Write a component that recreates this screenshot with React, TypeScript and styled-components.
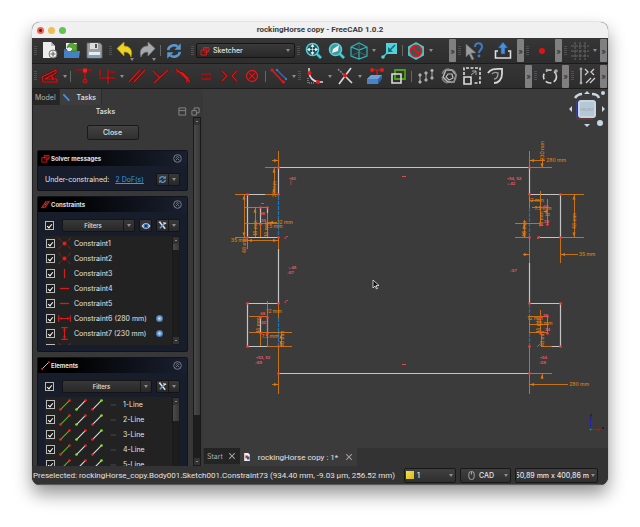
import React from "react";
import styled, { createGlobalStyle, css } from "styled-components";

const Global = createGlobalStyle`
  *, *::before, *::after { box-sizing: border-box; }
  body { margin: 0; background: #fff; }
  body, button, select, input { font-family: Inter, "Liberation Sans", sans-serif; }
  button { margin: 0; padding: 0; border: 0; background: none; color: inherit; font-size: inherit; }
  svg { display: block; flex: none; }
`;

const c = {
  text: "#e2e2e2",
  bar: "#303030",
  dock: "#383838",
  canvas: "#3b3b3b",
  edge: "#1c1c1c",
  red: "#d81a1a",
  orange: "#e07c0c",
  aqua: "#4fd0d8",
};

/* ---------- window frame ---------- */

const Page = styled.div`
  height: 100vh;
  padding: 22px 32px 42px;
  display: flex;
  overflow: hidden;
`;
const Window = styled.main`
  flex: 1;
  min-width: 0;
  display: flex;
  flex-direction: column;
  overflow: hidden;
  border-radius: 8px;
  background: ${c.bar};
  color: ${c.text};
  font-size: 7px;
  box-shadow: 0 0 1px rgba(0, 0, 0, 0.5), 0 9px 18px rgba(0, 0, 0, 0.42);
`;
const TitleBar = styled.header`
  flex: none;
  height: 16px;
  padding: 0 5px;
  display: grid;
  grid-template-columns: 1fr auto 1fr;
  align-items: center;
  background: #f1f0f0;
  color: #3c3c3c;
`;
const Title = styled.h1`
  margin: 0;
  font-family: Roboto, Inter, sans-serif;
  font-size: 8px;
  line-height: 16px;
  font-weight: 700;
`;
const Lights = styled.div`
  display: flex;
  gap: 4px;
`;
const Light = styled.button<{ $color: string; $dot?: boolean }>`
  width: 7px;
  height: 7px;
  border-radius: 50%;
  background: ${(p) => (p.$dot ? `radial-gradient(#7a1510 1px, ${p.$color} 2px)` : p.$color)};
`;

/* ---------- toolbars ---------- */

const ToolRow = styled.div<{ $h: number }>`
  flex: none;
  height: ${(p) => p.$h}px;
  padding-right: 1px;
  display: flex;
  border-bottom: 1px solid ${c.edge};
  background: linear-gradient(#363636, #2d2d2d);
`;
const Group = styled.div<{ $w?: number }>`
  display: flex;
  align-items: center;
  ${(p) => (p.$w ? css`flex: none; width: ${p.$w}px;` : css`flex: 1;`)}
`;
const Grip = styled.span`
  flex: none;
  width: 3px;
  height: 10px;
  margin: 0 2px;
  background: repeating-linear-gradient(#505050 0 1px, transparent 1px 2px);
`;
const Tool = styled.button<{ $w?: number }>`
  flex: none;
  width: ${(p) => p.$w ?? 22}px;
  height: 22px;
  display: grid;
  place-items: center;
  position: relative;
`;
const Caret = styled.span`
  flex: none;
  width: 7px;
  display: grid;
  place-items: center;
  &::after {
    content: "";
    border: 2px solid transparent;
    border-top: 3px solid #8d8d8d;
    border-bottom: 0;
  }
`;
const CornerCaret = styled(Caret)`
  position: absolute;
  right: 1px;
  bottom: 1px;
`;
const Divider = styled.span`
  flex: none;
  width: 1px;
  height: 11px;
  margin: 0 2px;
  background: #666;
`;
const More = styled.button`
  flex: none;
  align-self: center;
  width: 7px;
  height: 23px;
  margin-left: auto;
  border-radius: 1px;
  background: #808080;
  color: #242424;
  font-size: 8px;
  line-height: 20px;
  text-align: center;
`;
const Workbench = styled.label`
  flex: 1;
  height: 15px;
  padding: 0 3px;
  display: flex;
  align-items: center;
  gap: 3px;
  border: 1px solid #151515;
  border-radius: 2px;
  background: linear-gradient(#3a3a3a, #282828);
`;
const Picker = styled.select`
  flex: 1;
  min-width: 0;
  padding: 0;
  border: 0;
  appearance: none;
  background: transparent;
  color: ${c.text};
  font-size: 7px;
  font-weight: 500;
`;

/* ---------- task dock ---------- */

const Body = styled.div`
  flex: 1;
  min-height: 0;
  display: flex;
`;
const Dock = styled.aside`
  flex: none;
  width: 171px;
  display: flex;
  flex-direction: column;
  background: ${c.dock};
  border-left: 1px solid #222;
`;
const DockTabs = styled.div`
  flex: none;
  height: 16px;
  display: flex;
  align-items: stretch;
`;
const DockTab = styled.button<{ $active?: boolean }>`
  padding: 0 3px 0 2px;
  display: flex;
  align-items: center;
  gap: 6px;
  font-size: 7px;
  font-weight: ${(p) => (p.$active ? 500 : 400)};
  color: ${(p) => (p.$active ? c.text : "#b4b4b4")};
  background: ${(p) => (p.$active ? "#3d3d3d" : "#262626")};
  border-right: 1px solid #2a2a2a;
  ${(p) => p.$active && css`padding-right: 5px;`}
`;
const DockTitle = styled.div`
  flex: none;
  height: 12px;
  padding-right: 3px;
  display: grid;
  grid-template-columns: 1fr auto;
  align-items: center;
  text-align: center;
  font-weight: 500;
`;
const DockTools = styled.div`
  display: flex;
  gap: 4px;
`;
const DockBody = styled.div`
  flex: 1;
  min-height: 0;
  display: flex;
  gap: 5px;
  padding: 0 2px 0 4px;
`;
const TaskList = styled.div`
  flex: 1;
  min-width: 0;
  overflow: hidden;
  padding-top: 8px;
  display: flex;
  flex-direction: column;
  gap: 5px;
`;
const CloseButton = styled.button`
  flex: none;
  align-self: center;
  width: 52px;
  height: 15px;
  margin-bottom: 5px;
  border: 1px solid #1a1a1a;
  border-radius: 2px;
  background: linear-gradient(#424242, #303030);
  font-size: 7px;
  font-weight: 500;
`;
const Panel = styled.section<{ $list?: boolean }>`
  flex: none;
  padding-bottom: ${(p) => (p.$list ? 6 : 0)}px;
  border: 1px solid #10131b;
  border-radius: 2px;
  background: #171d2a;
`;
const PanelHead = styled.header`
  height: 15px;
  padding: 0 5px 0 3px;
  display: flex;
  align-items: center;
  gap: 1px;
  background: linear-gradient(90deg, #000 20%, #1a2030);
`;
const PanelTitle = styled.h2`
  flex: 1;
  margin: 0;
  font-size: 6px;
  font-weight: 700;
`;
const PanelRow = styled.div`
  height: 24px;
  padding: 3px 7px 0;
  display: flex;
  align-items: center;
  gap: 4px;
`;
const Message = styled.p`
  flex: 1;
  margin: 0;
  display: flex;
  gap: 6px;
  white-space: nowrap;
  a { color: #2f9bea; }
`;
const Split = styled.div<{ $grow?: boolean }>`
  height: 13px;
  display: flex;
  border: 1px solid #141414;
  border-radius: 2px;
  background: linear-gradient(#383838, #282828);
  ${(p) => p.$grow && css`flex: 1; margin-left: 4px;`}
  button { display: grid; place-items: center; width: 11px; font-size: 6px; font-weight: 500; }
  button + button { border-left: 1px solid #181818; }
  ${(p) => p.$grow && css`button:first-child { flex: 1; }`}
`;
const Check = styled.input`
  flex: none;
  width: 9px;
  height: 9px;
  margin: 0;
  display: grid;
  place-items: center;
  appearance: none;
  border: 1px solid #b9b9b9;
  background: #1b1b1b;
  &:checked::after {
    content: "";
    width: 3px;
    height: 5px;
    border: solid #fff;
    border-width: 0 1px 1px 0;
    transform: rotate(40deg);
  }
`;
const ListBox = styled.div<{ $h: number }>`
  height: ${(p) => p.$h}px;
  margin: 0 7px;
  display: flex;
  overflow: hidden;
  background: #222;
`;
const Rows = styled.ul`
  flex: 1;
  margin: 0;
  padding: 0 0 0 1px;
  list-style: none;
`;
const Row = styled.li`
  height: 15px;
  display: flex;
  align-items: center;
  label { flex: 1; display: flex; align-items: center; gap: 4px; }
`;
const ConstraintLabel = styled.label`
  && { gap: 3px; }
`;
const RowText = styled.span`
  white-space: nowrap;
`;
const Ball = styled.span`
  width: 7px;
  height: 7px;
  margin-right: 9px;
  border-radius: 50%;
  background: radial-gradient(#cfe0f2, #3f74ad 65%);
`;
const Scroll = styled.div`
  flex: none;
  width: 8px;
  display: flex;
  flex-direction: column;
  border: 1px solid #191919;
  background: #1d1d1d;
`;
const ScrollEnd = styled.button`
  flex: none;
  height: 7px;
  display: grid;
  place-items: center;
  background: #333;
  &::after { content: ""; width: 2px; height: 1px; background: #888; }
`;
const Thumb = styled.span<{ $size: string }>`
  flex: 0 0 ${(p) => p.$size};
  background: linear-gradient(90deg, #4a4a4a, #383838);
`;
const Track = styled.span`
  flex: 1;
  min-height: 0;
  display: flex;
  flex-direction: column;
`;

/* ---------- drawing area ---------- */

const Work = styled.section`
  flex: 1;
  min-width: 0;
  display: flex;
  flex-direction: column;
  background: #333;
`;
const Canvas = styled.div`
  flex: 1;
  min-height: 0;
  position: relative;
  background: ${c.canvas};
  > svg:first-child { width: 100%; height: 100%; }
`;
const NavCube = styled.div`
  position: absolute;
  top: 0;
  right: 1px;
`;
const Axes = styled.div`
  position: absolute;
  right: 0;
  bottom: 14px;
`;
const DocTabs = styled.div`
  flex: none;
  height: 18px;
  padding-left: 1px;
  display: flex;
  align-items: flex-start;
`;
const DocTab = styled.div<{ $active?: boolean }>`
  height: ${(p) => (p.$active ? 18 : 16)}px;
  padding: 0 4px 0 3px;
  display: flex;
  align-items: center;
  gap: ${(p) => (p.$active ? 7 : 5)}px;
  background: ${(p) => (p.$active ? c.canvas : "#242424")};
  color: ${(p) => (p.$active ? c.text : "#aaa")};
  font-family: ${(p) => (p.$active ? "Roboto, Inter, sans-serif" : "inherit")};
  font-size: ${(p) => (p.$active ? 8 : 7)}px;
`;

const StatusBar = styled.footer`
  flex: none;
  height: 19px;
  padding: 0 10px 0 1px;
  display: flex;
  align-items: center;
  gap: 4px;
  background: #333;
  font-weight: 500;
  border-bottom: 1px solid #5a5a5a;
`;
const StatusText = styled.span`
  flex: 1;
  min-width: 0;
  overflow: hidden;
  white-space: nowrap;
  font-family: Roboto, Inter, sans-serif;
  font-size: 8px;
  font-weight: 400;
`;
const StatusButton = styled.button<{ $w: number; $tight?: boolean }>`
  flex: none;
  width: ${(p) => p.$w}px;
  height: 15px;
  padding: 0 1px;
  display: flex;
  align-items: center;
  gap: ${(p) => (p.$tight ? 0 : 3)}px;
  border: 1px solid #181818;
  border-radius: 2px;
  background: linear-gradient(#404040, #2f2f2f);
  font-weight: 500;
`;
const StatusLabel = styled.span<{ $align?: string }>`
  flex: 1;
  min-width: 0;
  overflow: hidden;
  display: flex;
  align-items: center;
  justify-content: ${(p) => p.$align ?? "flex-start"};
  gap: 3px;
  white-space: nowrap;
`;
const Swatch = styled.span`
  width: 8px;
  height: 8px;
  background: linear-gradient(135deg, #f6e04c, #d8b71c);
`;

/* ---------- icons ---------- */

type IconProps = { size?: number; children: React.ReactNode; stroke?: string; sw?: number };
const Icon = ({ size = 20, children, stroke = "none", sw = 1.5 }: IconProps) => (
  <svg width={size} height={size} viewBox="0 0 20 20" fill="none" stroke={stroke} strokeWidth={sw} aria-hidden="true">
    {children}
  </svg>
);
const RedIcon = ({ children, d }: { children?: React.ReactNode; d: string }) => (
  <Icon>
    <path d={d} stroke="#5c0808" strokeWidth="2.2" />
    <path d={d} stroke={c.red} strokeWidth="1.2" />
    {children}
  </Icon>
);

const NewIcon = () => (
  <Icon>
    <path d="M3 1h8l4 4v12H3z" fill="#ededed" />
    <path d="M11 1v4h4z" fill="#b9b9b9" />
    <circle cx="13" cy="13" r="4" fill="#eee" stroke="#777" strokeWidth="1" />
    <path d="M13 10.500v5M10.500 13h5" stroke="#666" strokeWidth="1.2" />
  </Icon>
);
const OpenIcon = () => (
  <Icon>
    <path d="M4 2h11v10H4z" fill="#eee" />
    <path d="M2 8h3l1 3h11v6H2z" fill="#3571ad" />
    <path d="M2 10h16l-1 7H2z" fill="#4583c0" />
    <path d="M5 7C6 2 10 1 13 4l2-1v7H9l2-2C9 6 7 5 5 7z" fill="#59a832" stroke="#2d6d16" strokeWidth=".6" />
  </Icon>
);
const SaveIcon = () => (
  <Icon>
    <path d="M3 2h13l2 2v13H3z" fill="#9ba0a3" stroke="#62676a" strokeWidth=".8" />
    <path d="M6 2h8v6H6z" fill="#deded9" />
    <path d="M11 3h2v4h-2z" fill="#555" />
    <path d="M5 11h11v6H5z" fill="#e9ecef" />
    <path d="M5 14h11v3H5z" fill="#7aa0c6" />
  </Icon>
);
const UndoIcon = ({ redo }: { redo?: boolean }) => (
  <Icon>
    <g transform={redo ? "matrix(-1 0 0 1 20 0)" : undefined}>
      <path d="M2 7.500 9 1v4c6 0 9 4 7 11-1.500-4-3.500-5-7-5v4z" fill={redo ? "#a7abae" : "#f0d322"} stroke={redo ? "#7b7f82" : "#b39a10"} strokeWidth=".7" />
    </g>
  </Icon>
);
const RefreshIcon = ({ size = 20 }: { size?: number }) => (
  <Icon size={size} stroke="#5b97cf" sw={2.800}>
    <path d="M3.500 9A6.500 6 0 0 1 14 5M16.500 11A6.500 6 0 0 1 6 15" />
    <path d="M17.500 1.500v7h-7zM2.500 18.500v-7h7z" fill="#5b97cf" stroke="none" />
  </Icon>
);
const SketchIcon = ({ size = 10 }: { size?: number }) => (
  <Icon size={size} stroke={c.red} sw={2}>
    <path d="M2 8h11v10H2zM7 8V3h11v8h-5" />
    <circle cx="12" cy="9" r="4.500" strokeWidth="1.500" />
  </Icon>
);
const ZoomIcon = ({ fit }: { fit?: boolean }) => (
  <Icon>
    <path d="m12 12 5 5" stroke="#216e75" strokeWidth="3.600" />
    <path d="m12 12 5 5" stroke={c.aqua} strokeWidth="2.200" />
    <circle cx="8.500" cy="8.500" r="6" fill={fit ? "#1f5057" : "#42979d"} stroke={c.aqua} strokeWidth="1.600" />
    {fit ? <path d="M8.500 4v9M4 8.500h9M8.500 3.500l-1.500 2h3zM8.500 13.500l-1.500-2h3zM3.500 8.500l2-1.500v3zM13.500 8.500l-2-1.500v3z" stroke="#fff" strokeWidth=".6" fill="#fff" />
      : <path d="M5 12l1-4 6-4-1 6z" fill="#eee" />}
  </Icon>
);
const CubeIcon = () => (
  <Icon stroke="#35b1ba" sw={1.200}>
    <path d="M2 6 10 2l8 4v9l-8 3-8-3zM2 6l8 3 8-3M10 9v9" />
    <path d="M10 2v9M2 15l8-4 8 4" strokeWidth=".8" stroke="#26858c" />
  </Icon>
);
const LinkIcon = () => (
  <Icon>
    <path d="M7 2h11v11H7z" fill="#52d2da" />
    <path d="m16 4-6 6" stroke="#176d75" strokeWidth="1.600" />
    <path d="M9 6v5h5z" fill="#176d75" />
    <path d="m9 11-5 5" stroke={c.aqua} strokeWidth="1.200" />
    <circle cx="4" cy="16" r="1.800" fill="#52d2da" />
  </Icon>
);
const ClipIcon = () => (
  <Icon>
    <path d="M2 5.500 10 1l8 4.500v9L10 19l-8-4.500z" fill="#42c4cb" />
    <circle cx="10" cy="10" r="5.500" fill="#245f66" stroke="#e31717" strokeWidth="1.800" />
    <path d="m6 6 8 8" stroke="#e31717" strokeWidth="1.800" />
  </Icon>
);
const WhatsThisIcon = () => (
  <Icon>
    <path d="M2 3v13l3-3 3 6 2-1-3-6h5z" fill="#9a9da0" stroke="#666" strokeWidth=".6" />
    <path d="M11 6c0-5 7-5 7 0 0 3-3 3-3 6" stroke="#3f7cc4" strokeWidth="2" />
    <circle cx="15" cy="15" r="1.400" fill="#3f7cc4" />
  </Icon>
);
const ExportIcon = () => (
  <Icon>
    <path d="M5 10H2.500v7h15v-7H15" stroke="#ddd" strokeWidth="1.600" />
    <path d="m10 1 5 6h-3v6H8V7H5z" fill="#4b8ed6" stroke="#1f4c80" strokeWidth=".6" />
  </Icon>
);
const GridIcon = () => (
  <Icon stroke="#666" sw={1}>
    <path d="M5 1v18M10 1v18M15 1v18M1 5h18M1 10h18M1 15h18" strokeDasharray="3 1" />
  </Icon>
);
const DimensionIcon = () => (
  <RedIcon d="M2 11 16 4v3L5 13h12v3H3zM11 9c2 1 2 3 2 5" />
);
const CoincidentIcon = () => (
  <RedIcon d="M2 4h16M11 4v9">
    <path d="M9 2.500h4v4H9z" fill="#f02020" />
    <circle cx="11" cy="15" r="2" fill="#8c1010" stroke={c.red} strokeWidth=".8" />
  </RedIcon>
);
const BlockIcon = () => (
  <RedIcon d="M6.500 6.500l7 7M13.500 6.500l-7 7">
    <circle cx="10" cy="10" r="5.500" stroke={c.red} strokeWidth="1.300" />
  </RedIcon>
);
const ToggleIcon = () => (
  <Icon>
    <path d="m3 4 11 12" stroke={c.red} strokeWidth="1.800" />
    <path d="m8 4 9 9" stroke="#3569ad" strokeWidth="1.400" />
    <g fill="#e01a1a"><circle cx="3" cy="4" r="1.600" /><circle cx="14.500" cy="16" r="1.600" /></g>
    <g fill="#3f78c2"><circle cx="8" cy="4" r="1.200" /><circle cx="17" cy="13" r="1.200" /></g>
  </Icon>
);
const FilletIcon = () => (
  <Icon>
    <path d="M3 12v5h6" stroke="#888" strokeDasharray="1 1" />
    <path d="M4 2v5c1 5 4 8 9 9h5" stroke="#ddd" strokeWidth="1.500" />
    <circle cx="4.500" cy="7" r="2" fill="#f01818" /><circle cx="13" cy="16" r="2" fill="#f01818" />
  </Icon>
);
const TrimIcon = () => (
  <Icon>
    <path d="m3 3 6 6" stroke="#888" strokeDasharray="2 1" />
    <path d="M16 2 4 18M9 9l8 8" stroke="#ddd" strokeWidth="1.600" />
    <circle cx="10" cy="9.500" r="2" fill="#f01818" />
  </Icon>
);
const ExternalIcon = () => (
  <Icon>
    <path d="M7 4h10M12 4v5" stroke={c.red} strokeWidth="1.200" />
    <circle cx="7" cy="4" r="1.900" fill="#f01818" /><circle cx="17" cy="4" r="1.900" fill="#f01818" />
    <path d="M2 13l4-4h11v4l-4 5H2z" fill="#2d62a4" />
    <path d="M2 13l4-4h11l-4 4z" fill="#6ba0d8" />
    <path d="M2 13h11v5H2z" fill="#4a82c3" />
  </Icon>
);
const CarbonIcon = () => (
  <Icon>
    <path d="M7 4h10v9H7z" stroke="#4aa313" strokeWidth="1.800" />
    <path d="M4 8h9v9H4z" stroke="#ddd" strokeWidth="1.600" />
  </Icon>
);
const PolesIcon = () => (
  <Icon stroke="#a8a8a8" sw={1}>
    <path d="M4 9v7M10 7v7M16 5v7" />
    <g fill="#b7b7b7"><circle cx="4" cy="9" r="1.200" /><circle cx="4" cy="16" r="1.200" /><circle cx="10" cy="7" r="1.200" /><circle cx="10" cy="14" r="1.200" /><circle cx="16" cy="4.500" r="1.200" /><circle cx="16" cy="12" r="1.200" /></g>
  </Icon>
);
const OverlapIcon = () => (
  <Icon stroke="#bcbcbc" sw={1.400}>
    <path d="M7 4h6l4 5-2 7H9l-5-5z" /><path d="M9 8h4l1 4-4 2-3-3z" strokeWidth="1.200" /><ellipse cx="10" cy="10" rx="7" ry="7" stroke="#858585" strokeDasharray="9 3" />
  </Icon>
);
const ScaleIcon = () => (
  <Icon stroke="#ddd" sw={1.600}>
    <path d="M2 9V2h16v15h-6" strokeDasharray="3 1.500" /><path d="M2 11h7v7H2z" /><path d="m9 9 5-4M10 5h4v4" stroke="#aaa" strokeWidth="1" />
  </Icon>
);
const OffsetIcon = () => (
  <Icon stroke="#d5d5d5" sw={1.800}>
    <path d="M3 7c3-5 8-4 14-4v5c0 6-4 9-8 9" /><path d="M7 8c2-2 3-2 6-1 0 4-1 6-4 6" stroke="#999" strokeWidth="1.400" />
  </Icon>
);
const CircleIcon = () => (
  <Icon stroke="#d5d5d5" sw={1.600}>
    <circle cx="10" cy="10.500" r="6.500" strokeDasharray="6 2.500" /><circle cx="16" cy="5" r="1.800" fill="#aaa" stroke="none" /><circle cx="7" cy="4" r="1.300" fill="#aaa" stroke="none" />
  </Icon>
);
const MixedIcon = () => (
  <Icon stroke="#d0d0d0" sw={1.300}>
    <path d="M4 3v14M8 3l3 3-3 3M17 3l-3 3 3 3M9 17l5-5M13 17l5-5" />
    <circle cx="4" cy="3" r="1.400" fill="#aaa" stroke="none" /><circle cx="4" cy="17" r="1.400" fill="#aaa" stroke="none" />
  </Icon>
);
const FoldIcon = () => (
  <Icon size={9} stroke="#8b90a0" sw={1.800}>
    <circle cx="10" cy="10" r="8.500" /><path d="m6 9 4-4 4 4M6 14l4-4 4 4" />
  </Icon>
);
const ToolsIcon = () => (
  <Icon size={9}>
    <path d="m4 3 12 14" stroke="#e2e2e2" strokeWidth="3.400" /><path d="M16 4 4 16" stroke="#6c9fd4" strokeWidth="3.400" />
    <path d="M12 3l3 3 3-2M2 3l4-1" stroke="#e2e2e2" strokeWidth="2.500" />
  </Icon>
);
const EyeIcon = () => (
  <Icon size={10}>
    <path d="M1 10c5-8 13-8 18 0-5 8-13 8-18 0z" fill="#c8dcf2" /><circle cx="10" cy="10" r="5" fill="#3973b4" /><circle cx="10" cy="10" r="2.200" fill="#0c2340" />
  </Icon>
);
const XIcon = () => (
  <Icon size={8} stroke="#a0a0a0" sw={2.600}><path d="m3 3 14 14M17 3 3 17" /></Icon>
);
const LineIcon = ({ a, line, b }: { a: string; line: string; b: string }) => (
  <Icon size={12}>
    <path d="M2 18 18 2" stroke={line} strokeWidth="1.800" /><circle cx="2.500" cy="17.500" r="2.200" fill={a} /><circle cx="17.500" cy="2.500" r="2.200" fill={b} />
  </Icon>
);

const rowIcons: Record<string, React.ReactNode> = {
  point: <Icon size={13} stroke="#c81818" sw={1.500}><path d="m1 2 5 5M19 2l-5 5M1 18l5-5M19 18l-5-5" strokeDasharray="4 1.500" /><circle cx="10" cy="10" r="3" fill="#f01818" stroke="none" /></Icon>,
  vertical: <Icon size={13} stroke={c.red} sw={2}><path d="M10 3v14" /></Icon>,
  horizontal: <Icon size={13} stroke={c.red} sw={2}><path d="M3 10h14" /></Icon>,
  distanceX: <Icon size={13} stroke={c.red} sw={1.800}><path d="M1 5v10M19 5v10M2 10h16M5 8v4M15 8v4" /></Icon>,
  distanceY: <Icon size={13} stroke={c.red} sw={1.800}><path d="M5 1h10M5 19h10M10 2v16M8 5h4M8 15h4" /></Icon>,
};

/* ---------- data ---------- */

const constraints: { name: string; kind: string; ball?: boolean }[] = [
  { name: "Constraint1", kind: "point" },
  { name: "Constraint2", kind: "point" },
  { name: "Constraint3", kind: "vertical" },
  { name: "Constraint4", kind: "horizontal" },
  { name: "Constraint5", kind: "horizontal" },
  { name: "Constraint6 (280 mm)", kind: "distanceX", ball: true },
  { name: "Constraint7 (230 mm)", kind: "distanceY", ball: true },
  { name: "Constraint8", kind: "point" },
];
const elements = ["1-Line", "2-Line", "3-Line", "4-Line", "5-Line"];

const points = [
  [278, 167], [529, 167], [278, 373], [529, 373],
  [247, 194], [278, 194], [247, 237], [278, 237], [260, 207], [267, 207], [260, 224],
  [247, 303], [278, 303], [247, 346], [278, 346], [260, 317], [267, 317], [260, 333], [267, 333],
  [529, 194], [560, 194], [529, 237], [560, 237], [540, 224], [547, 224], [538, 237], [543, 207],
  [529, 303], [560, 303], [529, 346], [560, 346], [540, 317], [547, 316], [540, 333], [547, 333],
];
const arrows: [number, number, number][] = [
  [278, 160, 0], [274, 168, 270], [274, 193, 90], [244, 195, 270], [244, 236, 90], [248, 240, 180], [277, 240, 0], [255, 208, 270],
  [530, 160, 180], [542, 167, 90], [574, 195, 270], [574, 236, 90], [528, 254, 0], [561, 254, 180], [524, 236, 90], [524, 224, 270],
  [278, 384, 0], [530, 384, 180], [542, 374, 270], [281, 334, 270], [281, 345, 90], [543, 211, 180], [269, 222, 180],
];
const dims: [string, number, number, boolean?][] = [
  ["280 mm", 556, 162], ["230 mm", 544, 151, true], ["48 mm", 576, 221, true], ["35 mm", 587, 256], ["40 mm", 526, 229, true],
  ["12 mm", 536, 202], ["7.5 mm", 543, 210], ["18 mm", 543, 219, true],
  ["39 mm", 276, 189, true], ["18 mm", 257, 228, true], ["16 mm", 268, 229, true], ["12 mm", 285, 224], ["7.5 mm", 274, 228], ["35 mm", 239, 242], ["48 mm", 246, 245, true],
  ["12 mm", 274, 313], ["7.5 mm", 270, 338], ["16 mm", 260, 325, true], ["40 mm", 284, 339, true],
  ["12 mm", 535, 320], ["7.5 mm", 544, 325], ["16 mm", 540, 325, true], ["40 mm", 544, 339, true], ["280 mm", 579, 386],
];
const marks: [string, number, number][] = [
  ["•62", 289, 180], ["|", 290, 184], ["⌄48", 288, 269], ["⁄47", 288, 274], ["•54, 53", 507, 180], ["⌄42", 507, 185],
  ["⁄47", 511, 272], ["•53, 52", 256, 359], ["⁄49", 256, 364], ["•54", 540, 359], ["⁄48", 540, 364],
  ["36", 260, 215], ["35", 261, 222], ["46", 260, 315], ["30", 261, 324], ["46", 543, 208], ["32", 545, 216], ["26", 544, 223], ["38", 543, 317], ["34", 545, 331],
];

const Sketch = () => (
  <svg viewBox="203 89 405 359" preserveAspectRatio="xMidYMid slice" role="img" aria-label="Sketch with dimensions" fontFamily="Inter, sans-serif">
    <g stroke="#c4c4c4" strokeWidth="1.200" fill="none">
      <path d="M278 167.500h251M278 373.500h251M278.500 167v27M278.500 249v54M529.500 167v27M529.500 263v40" />
      <path d="M265 194.500h-17.500v43H278M278 303.500h-30.500v43H267M529 194.500h31.500v43H540M529 303.500h31.500v43H551" />
      <path d="M260.500 207v17M267.500 207v6M260.500 317v16M267.500 317v16" />
    </g>
    <path d="M278.500 196v39M278.500 318v28M529.500 208v29M529.500 304v14M529.500 333v12" stroke="#1c78b8" strokeWidth="1.200" strokeDasharray="4 1" />
    <path d="M278.500 151v16M265 167.500h13M274.500 167v27M235 194.500h12M265 194.500h13M244.500 194v43M245 207.500h22M245 223.500h33M255.500 207v30M235 237.500h12M247.500 237v12M247 240.500h31M260.500 224v13M267.500 213v24M278.500 237v12M272 160.500h6M267 222.500h10M267.500 301v45M249 316.500h18M249 332.500h43M260.500 333v13M267 346.500h25M278.500 303v15M278.500 346v48M281.500 332v14M272 384.500h6M529.500 151v16M529 167.500h23M529 160.500h16M542.500 158v9M560 194.500h24M574.500 194v43M560 237.500h24M560.500 237v26M529.500 194v14M529.500 237v26M523 254.500h6M561 254.500h17M515 223.500h25M515 237.500h14M524.500 220v17M540.500 191v33M547.500 199v25M529 200.500h11M532 207.500h15M529.500 318v15M529.500 346v48M529 384.500h39M529 373.500h23M542.500 374v5M529 316.500h18M529 332.500h18M540.500 310v23M547.500 316v17M541.500 333v13M541 346.500h11M529 324.500h20" stroke={c.orange} fill="none" strokeWidth="1" opacity=".85" />
    {arrows.map(([x, y, r], i) => (
      <path key={i} d="M0 0-4-1.500V1.500z" fill={c.orange} transform={`translate(${x} ${y + 0.5}) rotate(${r})`} />
    ))}
    {dims.map(([t, x, y, v], i) => (
      <text key={i} fontSize="5" fontWeight="500" fill={c.orange} textAnchor="middle" transform={`translate(${x} ${y})${v ? " rotate(-90)" : ""}`}>{t}</text>
    ))}
    {marks.map(([t, x, y], i) => <text key={i} x={x} y={y} fontSize="4" fontWeight="600" fill="#e85c6b">{t}</text>)}
    <path d="M402 176.500h4M402 364.500h4M285 239c0-2 1-2.500 3-2.500M285 303c0-2 1-2.500 3-2.500M261 203.500h3M537 239l3-3M537 347l3-3" stroke="#d94a55" fill="none" />
    {points.map(([x, y], i) => <circle key={i} cx={x + 0.5} cy={y + 0.5} r="1.300" fill="#ff3b3b" />)}
    <path d="M373 280v8l2-2 1.500 3 1-.5-1.500-3h3z" fill="#111" stroke="#fff" strokeWidth=".7" />
  </svg>
);

const Scrollbar = ({ thumb }: { thumb: string }) => (
  <Scroll>
    <ScrollEnd aria-label="Scroll up" />
    <Track><Thumb $size={thumb} /></Track>
    <ScrollEnd aria-label="Scroll down" />
  </Scroll>
);
const Head = ({ icon, title }: { icon: React.ReactNode; title: string }) => (
  <PanelHead>{icon}<PanelTitle>{title}</PanelTitle><button aria-label={`Collapse ${title}`}><FoldIcon /></button></PanelHead>
);
const FilterBar = ({ eye }: { eye?: boolean }) => (
  <PanelRow>
    <Check type="checkbox" defaultChecked aria-label="Enable filters" />
    <Split $grow><button>Filters</button><button aria-label="Filter menu"><Caret /></button></Split>
    {eye && <Split><button aria-label="Show or hide"><EyeIcon /></button></Split>}
    <Split><button aria-label="Settings"><ToolsIcon /></button><button aria-label="Settings menu"><Caret /></button></Split>
  </PanelRow>
);
const MoreButton = () => <More aria-label="More tools">»</More>;

export default function App() {
  return (
    <>
      <Global />
      <Page>
        <Window>
          <TitleBar>
            <Lights>
              <Light $color="#ec6559" $dot aria-label="Close window" />
              <Light $color="#f2bd50" aria-label="Minimize" />
              <Light $color="#61c454" aria-label="Zoom window" />
            </Lights>
            <Title>rockingHorse copy - FreeCAD 1.0.2</Title>
          </TitleBar>

          <ToolRow $h={26}>
            <Group $w={75}>
              <Grip />
              <Tool aria-label="New"><NewIcon /></Tool>
              <Tool aria-label="Open"><OpenIcon /></Tool>
              <Tool aria-label="Save"><SaveIcon /></Tool>
            </Group>
            <Group $w={82}>
              <Grip />
              <Tool aria-label="Undo"><UndoIcon /><CornerCaret /></Tool>
              <Tool aria-label="Redo"><UndoIcon redo /><CornerCaret /></Tool>
              <Divider />
              <Tool aria-label="Refresh"><RefreshIcon size={18} /></Tool>
            </Group>
            <Group $w={106}>
              <Grip />
              <Workbench>
                <SketchIcon />
                <Picker aria-label="Workbench" defaultValue="Sketcher"><option>Sketcher</option></Picker>
                <Caret />
              </Workbench>
            </Group>
            <Group>
              <Grip />
              <Tool $w={23} aria-label="Fit all"><ZoomIcon fit /></Tool>
              <Tool $w={23} aria-label="Fit selection"><ZoomIcon /></Tool>
              <Tool aria-label="Isometric"><CubeIcon /></Tool><Caret />
              <Tool $w={23} aria-label="Go to linked object"><LinkIcon /></Tool>
              <Divider />
              <Tool aria-label="Clipping"><ClipIcon /></Tool><Caret />
              <MoreButton />
            </Group>
            <Group $w={34}><Grip /><Tool aria-label="What's this"><WhatsThisIcon /></Tool></Group>
            <Group $w={34}><Tool $w={26} aria-label="Export"><ExportIcon /></Tool><MoreButton /></Group>
            <Group $w={38}>
              <Grip />
              <Tool aria-label="Record macro"><Icon><circle cx="10" cy="10" r="3" fill="#e01212" /></Icon></Tool>
              <MoreButton />
            </Group>
            <Group $w={45}><Grip /><Tool aria-label="Grid"><GridIcon /></Tool><Caret /><MoreButton /></Group>
          </ToolRow>

          <ToolRow $h={25}>
            <Group $w={264}>
              <Grip />
              <Tool aria-label="Dimension"><DimensionIcon /></Tool><Caret />
              <Divider />
              <Tool aria-label="Coincident"><CoincidentIcon /></Tool>
              <Tool $w={23} aria-label="Horizontal or vertical"><RedIcon d="M2 12h16M11 3v15M3 4v6M13 6h5" /></Tool><Caret />
              <Tool $w={23} aria-label="Parallel"><RedIcon d="M2 16 13 4M7 16 18 4" /></Tool>
              <Tool $w={23} aria-label="Perpendicular"><RedIcon d="M4 17 18 4M3 5l7 7" /></Tool>
              <Tool $w={23} aria-label="Tangent"><RedIcon d="m3 3 14 13M3 6c8-1 11 4 11 11M9 7l7 6" /></Tool>
              <Tool $w={23} aria-label="Equal"><RedIcon d="M5 8h10M5 13h10" /></Tool>
              <Tool $w={23} aria-label="Symmetric"><RedIcon d="m3 5 5 5-5 5M18 5l-5 5 5 5" /></Tool>
              <Tool $w={23} aria-label="Block"><BlockIcon /></Tool>
              <Divider />
              <Tool aria-label="Toggle driving"><ToggleIcon /></Tool><Caret />
            </Group>
            <Group>
              <Grip />
              <Tool $w={23} aria-label="Fillet"><FilletIcon /></Tool><Caret />
              <Tool $w={23} aria-label="Trim"><TrimIcon /></Tool><Caret />
              <Tool $w={23} aria-label="External geometry"><ExternalIcon /></Tool>
              <Tool $w={23} aria-label="Carbon copy"><CarbonIcon /></Tool>
              <Divider />
              <Tool $w={23} aria-label="Poles"><PolesIcon /></Tool>
              <Tool $w={23} aria-label="Overlap"><OverlapIcon /></Tool>
              <Tool $w={23} aria-label="Scale"><ScaleIcon /></Tool>
              <Tool $w={23} aria-label="Offset"><OffsetIcon /></Tool>
              <MoreButton />
            </Group>
            <Group $w={37}><Grip /><Tool aria-label="Circle"><CircleIcon /></Tool><MoreButton /></Group>
            <Group $w={38}><Grip /><Tool aria-label="Constraints"><MixedIcon /></Tool><MoreButton /></Group>
          </ToolRow>

          <Body>
            <Dock>
              <DockTabs role="tablist">
                <DockTab role="tab">Model</DockTab>
                <DockTab role="tab" $active aria-selected="true">
                  <Icon size={9} stroke="#4a8cd8" sw={4}><path d="m3 3 13 14" /></Icon>Tasks
                </DockTab>
              </DockTabs>
              <DockTitle>
                <span>Tasks</span>
                <DockTools>
                  <button aria-label="Dock"><Icon size={9} stroke="#8b8b8b" sw={2}><path d="M2 2h15v16H2zM2 8h15" /></Icon></button>
                  <button aria-label="Float"><Icon size={9} stroke="#8b8b8b" sw={2}><path d="M2 8h10v10H2zM7 8V2h11v11h-6" /></Icon></button>
                </DockTools>
              </DockTitle>
              <DockBody>
                <TaskList>
                  <CloseButton>Close</CloseButton>
                  <Panel>
                    <Head title="Solver messages" icon={<SketchIcon size={9} />} />
                    <PanelRow>
                      <Message>Under-constrained: <a href="#dof">2 DoF(s)</a></Message>
                      <Split><button aria-label="Recompute"><RefreshIcon size={9} /></button><button aria-label="Recompute menu"><Caret /></button></Split>
                    </PanelRow>
                  </Panel>
                  <Panel $list>
                    <Head title="Constraints" icon={<Icon size={9} stroke={c.red} sw={2.500}><path d="M1 18 12 2M8 18 19 2" /><path d="M4 18 16 2" stroke="#ddd" strokeWidth="1.200" strokeDasharray="3 1" /></Icon>} />
                    <FilterBar eye />
                    <ListBox $h={109}>
                      <Rows>
                        {constraints.map((r) => (
                          <Row key={r.name}>
                            <ConstraintLabel><Check type="checkbox" defaultChecked />{rowIcons[r.kind]}<RowText>{r.name}</RowText></ConstraintLabel>
                            {r.ball && <Ball />}
                          </Row>
                        ))}
                      </Rows>
                      <Scrollbar thumb="6%" />
                    </ListBox>
                  </Panel>
                  <Panel $list>
                    <Head title="Elements" icon={<Icon size={9}><path d="M2 18 18 2" stroke="#ddd" strokeWidth="2" /><circle cx="2.500" cy="17.500" r="2" fill="#f22" /><circle cx="17.500" cy="2.500" r="2" fill="#f22" /></Icon>} />
                    <FilterBar />
                    <ListBox $h={109}>
                      <Rows>
                        {elements.map((name) => (
                          <Row key={name}>
                            <label>
                              <Check type="checkbox" defaultChecked />
                              <LineIcon a="#f02020" line="#59b51a" b="#f02020" />
                              <LineIcon a="#7ae01a" line="#ddd" b="#f02020" />
                              <LineIcon a="#f02020" line="#ddd" b="#7ae01a" />
                              <Icon size={12} stroke="#444" sw={2}><path d="M6 10h9" /></Icon>
                              <RowText>{name}</RowText>
                            </label>
                          </Row>
                        ))}
                      </Rows>
                      <Scrollbar thumb="17%" />
                    </ListBox>
                  </Panel>
                </TaskList>
                <Scrollbar thumb="87%" />
              </DockBody>
            </Dock>

            <Work>
              <Canvas>
                <Sketch />
                <NavCube>
                  <svg width="40" height="40" viewBox="0 0 40 40" fill="#c5d7e4" aria-label="Navigation cube">
                    <path d="M9.500 29V12" stroke="#3c3c9c" fill="none" /><path d="M10 30h16" stroke="#8c3540" fill="none" />
                    <rect x="11" y="11" width="18" height="18" rx="3" /><rect x="13" y="13" width="14" height="14" rx="1" fill="#b5c8d6" />
                    <text x="20" y="22" fontSize="4" fill="#8fa2b0" textAnchor="middle" fontFamily="Inter, sans-serif">FRONT</text>
                    <path d="M17 5l3-3 3 3zM17 35h6l-3 3zM5 17v6l-3-3zM35 17v6l3-3z" />
                    <path d="M8 9c2-3 5-4 7-4M25 5c3 0 6 1 7 4" stroke="#c5d7e4" strokeWidth="2.500" fill="none" />
                    <circle cx="36" cy="4" r="2" /><circle cx="33" cy="34" r="3" />
                  </svg>
                </NavCube>
                <Axes>
                  <svg width="20" height="20" viewBox="0 0 20 20" aria-label="Axes">
                    <path d="M2.500 15V4" stroke="#2525a5" /><path d="M1 6 2.500 2 4 6z" fill="#2525a5" />
                    <path d="M3 15.500h9" stroke="#a02020" /><path d="M10 14v3l4-1.500z" fill="#a02020" /><circle cx="2.500" cy="15.500" r="1" fill="#2a9a2a" />
                    <path d="M2 0h2l-2 2h2M14 13l2 2M16 13l-2 2" stroke="#181818" strokeWidth=".7" fill="none" />
                  </svg>
                </Axes>
              </Canvas>
              <DocTabs role="tablist">
                <DocTab><span role="tab">Start</span><button aria-label="Close Start"><XIcon /></button></DocTab>
                <DocTab $active>
                  <Icon size={8}><path d="M3 0h10l4 4v16H3z" fill="#eee" /><path d="M6 6h6v7H6z" fill="#d82828" /><path d="M10 9h6v7h-6z" fill="#2658a8" /></Icon>
                  <span role="tab" aria-selected="true">rockingHorse copy : 1*</span>
                  <button aria-label="Close rockingHorse copy"><XIcon /></button>
                </DocTab>
              </DocTabs>
            </Work>
          </Body>

          <StatusBar>
            <StatusText>Preselected: rockingHorse_copy.Body001.Sketch001.Constraint73 (934.40 mm, -9.03 µm, 256.52 mm)</StatusText>
            <StatusButton $w={52}><Swatch /><StatusLabel>1</StatusLabel><Caret /></StatusButton>
            <StatusButton $w={51}>
              <StatusLabel $align="center">
                <Icon size={9} stroke="#ccc" sw={1.600}><rect x="4" y="1" width="12" height="18" rx="6" /><path d="M10 2v6" /></Icon>CAD
              </StatusLabel><Caret />
            </StatusButton>
            <StatusButton $w={83} $tight><StatusLabel $align="flex-end">50,89 mm x 400,86 m</StatusLabel><Caret /></StatusButton>
          </StatusBar>
        </Window>
      </Page>
    </>
  );
}
